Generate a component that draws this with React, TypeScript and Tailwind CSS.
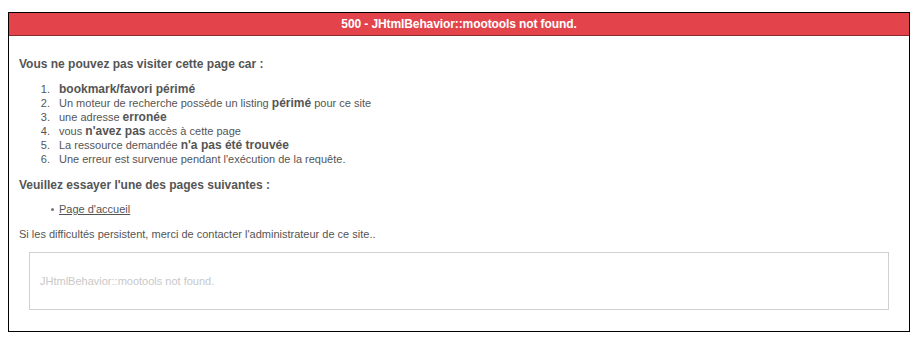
const items: React.ReactNode[] = [
  <strong className="text-[12px]">bookmark/favori périmé</strong>,
  <>Un moteur de recherche possède un listing <strong className="text-[12px]">périmé</strong> pour ce site</>,
  <>une adresse <strong className="text-[12px]">erronée</strong></>,
  <>vous <strong className="text-[12px]">n'avez pas</strong> accès à cette page</>,
  <>La ressource demandée <strong className="text-[12px]">n'a pas été trouvée</strong></>,
  <>Une erreur est survenue pendant l'exécution de la requête.</>,
];

export default function App() {
  return (
    <div className="bg-white min-h-[337px] pt-3 pl-2 pr-[14px] font-['Liberation_Sans',Arial,sans-serif] text-[#555]">
      <div className="border border-black">
        <div className="bg-[#e3444c] border-b border-[#8a2a2f] h-[23px] flex items-center justify-center text-white font-bold text-[12px] tracking-[-0.1px]">
          500 - JHtmlBehavior::mootools not found.
        </div>
        <div className="px-[10px] pt-[20px] pb-[21px] text-[11px] leading-[14px]">
          <p className="font-bold text-[12px] leading-[16px]">Vous ne pouvez pas visiter cette page car :</p>
          <ol className="mt-[10px]">
            {items.map((item, i) => (
              <li key={i} className="flex">
                <span className="w-[40px] text-right pr-[9px] shrink-0">{i + 1}.</span>
                <span>{item}</span>
              </li>
            ))}
          </ol>
          <p className="font-bold text-[12px] leading-[16px] mt-[11px]">Veuillez essayer l'une des pages suivantes :</p>
          <ul className="mt-[9px]">
            <li className="flex items-center">
              <span className="ml-[32px] mr-[5px] w-[3px] h-[3px] rounded-full bg-[#777]" />
              <a className="underline" href="#">Page d'accueil</a>
            </li>
          </ul>
          <p className="mt-[11px]">Si les difficultés persistent, merci de contacter l'administrateur de ce site..</p>
          <div className="mt-[11px] mx-[10px] border border-[#d0d0d0] h-[58px] flex items-center px-[10px] text-[#c8c8c8]">
            JHtmlBehavior::mootools not found.
          </div>
        </div>
      </div>
    </div>
  );
}
